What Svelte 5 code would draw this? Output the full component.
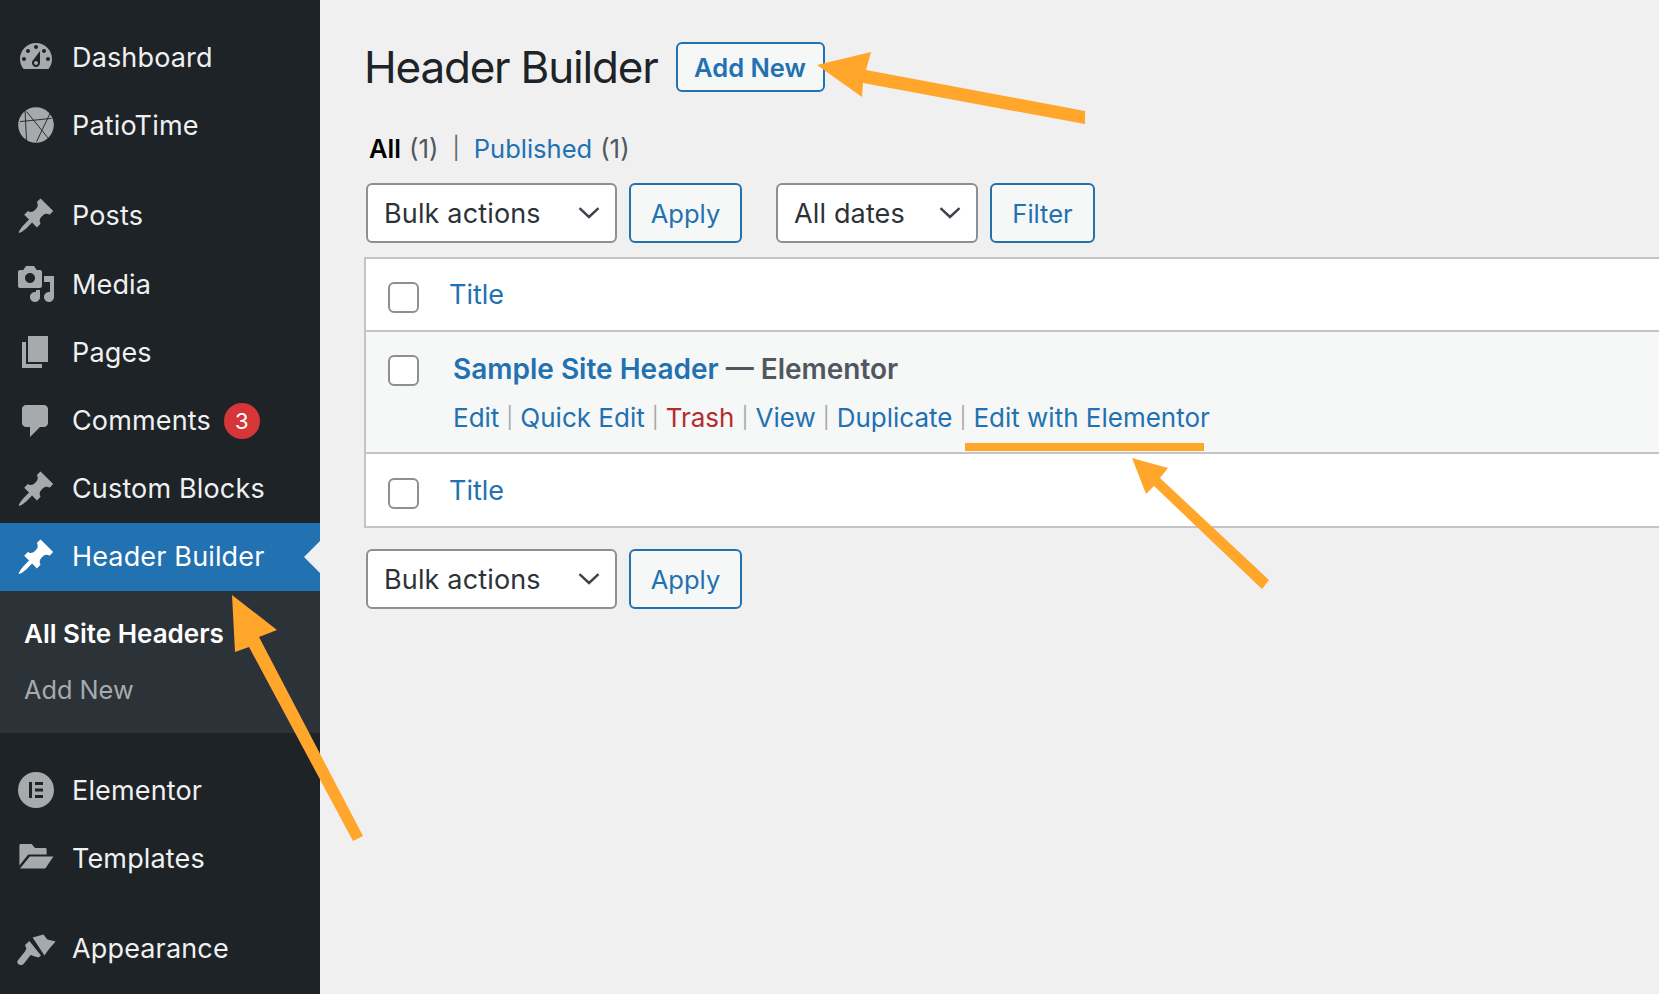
<script>
	const pin = 'M10.44 3.02l1.82-1.82 6.36 6.35-1.83 1.82c-1.05-.68-2.48-.57-3.41.36l-.75.75c-.92.93-1.04 2.35-.35 3.41l-1.83 1.82-2.41-2.41-2.8 2.79c-.42.42-3.38 2.71-3.8 2.29s1.86-3.39 2.28-3.81l2.79-2.79L4.1 9.36l1.83-1.82c1.05.69 2.48.57 3.4-.36l.75-.75c.93-.92 1.05-2.35.36-3.41z';
	const icons = {
		dashboard: 'M3.76 16h12.48c1.1-1.37 1.76-3.11 1.76-5 0-4.42-3.58-8-8-8s-8 3.58-8 8c0 1.89.66 3.63 1.76 5zM10 4c.55 0 1 .45 1 1s-.45 1-1 1-1-.45-1-1 .45-1 1-1zM6 6c.55 0 1 .45 1 1s-.45 1-1 1-1-.45-1-1 .45-1 1-1zm8 0c.55 0 1 .45 1 1s-.45 1-1 1-1-.45-1-1 .45-1 1-1zm-5.37 5.55L12 7v6c0 1.1-.9 2-2 2s-2-.9-2-2c0-.57.24-1.08.63-1.45zM4 10c.55 0 1 .45 1 1s-.45 1-1 1-1-.45-1-1 .45-1 1-1zm12 0c.55 0 1 .45 1 1s-.45 1-1 1-1-.45-1-1 .45-1 1-1zm-5 3c0-.55-.45-1-1-1s-1 .45-1 1 .45 1 1 1 1-.45 1-1z',
		pin,
		media: 'M13 11V4c0-.55-.45-1-1-1h-1.67L9 1H5L3.67 3H2c-.55 0-1 .45-1 1v7c0 .55.45 1 1 1h10c.55 0 1-.45 1-1zM7 4.5c1.38 0 2.5 1.12 2.5 2.5S8.38 9.5 7 9.5 4.5 8.38 4.5 7 5.62 4.5 7 4.5zM14 6h5v10.5c0 1.38-1.12 2.5-2.5 2.5S14 17.88 14 16.5s1.12-2.5 2.5-2.5c.17 0 .34.02.5.05V9h-3V6zm-4 8.05V13h2v3.5c0 1.38-1.12 2.5-2.5 2.5S7 17.88 7 16.5 8.12 14 9.5 14c.17 0 .34.02.5.05z',
		pages: 'M6 15V2h10v13H6zm-1 1h8v2H3V5h2v11z',
		comments: 'M5 2h9c1.1 0 2 .9 2 2v7c0 1.1-.9 2-2 2h-2l-5 5v-5H5c-1.1 0-2-.9-2-2V4c0-1.1.9-2 2-2z',
		folder: 'M1.700 13.800V3.700c0-.4.3-.7.7-.7h5.400l1.700 2h5.100c.4 0 .7.3.7.7v2.600H6.700c-.5 0-.8.2-1.100.6zM6.900 9.300h11.800l-3.700 5.500c-.2.3-.4.4-.7.4H2z',
		brush: 'M8.300 4.300 13.700 2.700 15.700 5.300 19.800 6.300 16.700 9.700 14.200 13.300zM6.700 6 12.500 13.300 11.200 14.300 9.400 13.800 7.300 13 3.900 17.400c-.6.700-1.600.8-2.500.3-.8-.6-1-1.300-.5-2L4.500 11.300 5.200 9.800 4.500 8z'
	};

	const menu = [
		{ label: 'Dashboard', icon: 'dashboard' },
		{ label: 'PatioTime', icon: 'patio', gapAfter: true },
		{ label: 'Posts', icon: 'pin' },
		{ label: 'Media', icon: 'media' },
		{ label: 'Pages', icon: 'pages' },
		{ label: 'Comments', icon: 'comments', badge: 3 },
		{ label: 'Custom Blocks', icon: 'pin' },
		{ label: 'Header Builder', icon: 'pin', current: true },
		{ label: 'Elementor', icon: 'elementor' },
		{ label: 'Templates', icon: 'folder', gapAfter: true },
		{ label: 'Appearance', icon: 'brush' }
	];

	const rowActions = [
		{ label: 'Edit' },
		{ label: 'Quick Edit' },
		{ label: 'Trash', danger: true },
		{ label: 'View' },
		{ label: 'Duplicate' },
		{ label: 'Edit with Elementor' }
	];
</script>

{#snippet chevron()}
	<svg class="chev" viewBox="0 0 22 12" width="22" height="12" aria-hidden="true">
		<path d="M1.500 1.200 11 10l9.500-8.800" fill="none" stroke="#3c434a" stroke-width="2.400" />
	</svg>
{/snippet}

{#snippet titleRow(last)}
	<div class="row" class:last>
		<input type="checkbox" class="check" />
		<a class="col-title" href="#top">Title</a>
	</div>
{/snippet}

<div class="layout">
	<aside class="sidebar">
		{#each menu as item}
			<a class="item" class:current={item.current} class:gap-after={item.gapAfter} href="#top">
				<svg class="icon" viewBox="0 0 20 20" width="40" height="40" aria-hidden="true">
					{#if item.icon === 'patio'}
						<circle cx="10" cy="10" r="8.900" fill="currentColor" />
						<path d="M4.500 2.500 5.300 18.300M2 8.300 17.800 6.700M5.300 3.300 16.200 16.700M17 4.200 10.300 18.300" fill="none" stroke="#1d2327" stroke-width=".45" />
					{:else if item.icon === 'elementor'}
						<circle cx="10" cy="10" r="9" fill="currentColor" />
						<path d="M6.500 6h1.500v8H6.500zM9.500 6h4v1.500h-4zM9.500 9.200h4v1.500h-4zM9.500 12.500h4V14h-4z" fill="#1d2327" />
					{:else}
						<path d={icons[item.icon]} fill="currentColor" />
					{/if}
				</svg>
				<span>{item.label}</span>
				{#if item.badge}<b class="badge">{item.badge}</b>{/if}
			</a>
			{#if item.current}
				<div class="submenu">
					<a class="sub active" href="#top">All Site Headers</a>
					<a class="sub" href="#top">Add New</a>
				</div>
			{/if}
		{/each}
	</aside>

	<main class="content">
		<div class="title-bar">
			<h1>Header Builder</h1>
			<a class="btn add-new" href="#top">Add New</a>
		</div>

		<p class="views">
			<strong>All</strong> <span class="count">(1)</span>
			<span class="sep">|</span>
			<a href="#top">Published</a> <span class="count">(1)</span>
		</p>

		<div class="actions">
			<div class="select bulk">Bulk actions {@render chevron()}</div>
			<button class="btn apply">Apply</button>
			<div class="select dates">All dates {@render chevron()}</div>
			<button class="btn filter">Filter</button>
		</div>

		<div class="table">
			{@render titleRow(false)}
			<div class="row post">
				<input type="checkbox" class="check" />
				<div class="post-body">
					<div class="post-title"><a href="#top">Sample Site Header</a> — Elementor</div>
					<div class="row-actions">
						{#each rowActions as action, i}
							{#if i > 0}<span class="sep">|</span>{/if}
							<a href="#top" class:danger={action.danger}>{action.label}</a>
						{/each}
					</div>
				</div>
			</div>
			{@render titleRow(true)}
		</div>

		<div class="actions bottom">
			<div class="select bulk">Bulk actions {@render chevron()}</div>
			<button class="btn apply">Apply</button>
		</div>
	</main>

	<svg class="marks" viewBox="0 0 1659 994" width="1659" height="994" aria-hidden="true">
		<path d="M817 65 871 52 866 70 1085 111V124L863 83 862 97z" />
		<path d="M965 443H1204V451H965z" />
		<path d="M1132 458 1168 468 1160 478 1269 580 1262 589 1154 486 1146 494z" />
		<path d="M232 595 277 630 259 637 363 836 353 841 249 647 235 652z" />
	</svg>
</div>

<style>
	:global(body) {
		margin: 0;
		background: #f0f0f1;
		overflow: hidden;
	}
	.layout {
		position: relative;
		display: flex;
		height: 994px;
		overflow: hidden;
		font-family: Inter, 'Liberation Sans', sans-serif;
		font-size: 26px;
		color: #3c434a;
	}
	a { text-decoration: none; color: #2271b1; }

	.sidebar {
		flex: 0 0 320px;
		box-sizing: border-box;
		padding-top: 23px;
		background: #1d2327;
	}
	.item {
		display: flex;
		align-items: center;
		gap: 16px;
		height: 68.200px;
		padding-left: 16px;
		color: #f0f0f1;
		font-size: 27px;
		letter-spacing: 0.15px;
	}
	.item .icon { flex: none; color: #a7aaad; }
	.item.gap-after { margin-bottom: 22.500px; }
	.item.current {
		position: relative;
		background: #2271b1;
		color: #fff;
	}
	.item.current .icon { color: #fff; }
	.item.current::after {
		content: '';
		position: absolute;
		right: 0;
		top: 50%;
		margin-top: -16px;
		border: 16px solid transparent;
		border-left-width: 0;
		border-right-color: #f0f0f1;
	}
	.badge {
		display: flex;
		align-items: center;
		justify-content: center;
		width: 36px;
		height: 36px;
		margin-left: -3px;
		border-radius: 50%;
		background: #d63638;
		color: #fff;
		font-size: 22px;
		font-weight: 400;
	}
	.submenu {
		display: flex;
		flex-direction: column;
		height: 142px;
		margin-bottom: 23px;
		padding-top: 14px;
		box-sizing: border-box;
		background: #2c3338;
	}
	.sub {
		display: flex;
		align-items: center;
		height: 56px;
		padding-left: 24px;
		font-size: 25.300px;
		color: #a7aaad;
	}
	.sub.active { color: #fff; font-weight: 600; font-size: 26px; }

	.content {
		flex: 1;
		min-width: 0;
		padding: 42px 0 0 44px;
	}
	.title-bar {
		display: flex;
		align-items: center;
		gap: 18px;
		height: 50px;
	}
	h1 {
		margin: 0;
		font-size: 44px;
		font-weight: 400;
		letter-spacing: -1.200px;
		color: #1d2327;
		line-height: 50px;
	}
	.btn {
		display: inline-flex;
		align-items: center;
		justify-content: center;
		box-sizing: border-box;
		border: 2px solid #2271b1;
		border-radius: 6px;
		background: #f6f7f7;
		color: #2271b1;
		font: inherit;
		font-size: 25.500px;
		padding: 0;
	}
	.add-new {
		width: 149px;
		height: 50px;
		font-weight: 600;
	}
	.views {
		display: flex;
		align-items: center;
		gap: 8px;
		height: 36px;
		margin: 38px 0 0;
		padding-left: 5px;
		font-size: 25.500px;
	}
	.views strong { font-weight: 600; color: #000; }
	.count { color: #50575e; font-size: 26px; }
	.views .sep { margin: 0 6px; color: #646970; font-size: 22px; }
	.actions {
		display: flex;
		gap: 12px;
		height: 60px;
		margin: 17px 0 0 2px;
	}
	.select {
		position: relative;
		display: flex;
		align-items: center;
		box-sizing: border-box;
		padding-left: 16px;
		border: 2px solid #8c8f94;
		border-radius: 6px;
		background: #fff;
		color: #2c3338;
		font-size: 27px;
		letter-spacing: 0.15px;
	}
	.chev { position: absolute; right: 15px; top: 22px; }
	.bulk { width: 251px; }
	.apply { width: 113px; }
	.dates { width: 202px; margin-left: 22px; }
	.filter { width: 105px; }

	.table {
		box-sizing: border-box;
		margin-top: 14px;
		background: #fff;
		border: 2px solid #c3c4c7;
		border-right: 0;
	}
	.row {
		display: flex;
		align-items: flex-start;
		gap: 31px;
		height: 71px;
		padding: 23px 0 0 22px;
		box-sizing: border-box;
	}
	.row.last { height: 72px; padding-top: 24px; }
	.col-title { line-height: 26px; font-size: 27px; margin-left: -1px; }
	.check {
		appearance: none;
		flex: none;
		width: 31px;
		height: 31px;
		margin: 0;
		border: 2px solid #8c8f94;
		border-radius: 6px;
		background: #fff;
	}
	.post {
		height: 124px;
		background: #f6f7f7;
		border-top: 2px solid #c3c4c7;
		border-bottom: 2px solid #c3c4c7;
	}
	.post-body { margin: -4px 0 0 3px; }
	.post-title {
		font-size: 28px;
		font-weight: 600;
		line-height: 36px;
		color: #50575e;
	}
	.row-actions {
		display: flex;
		align-items: center;
		gap: 7px;
		height: 34px;
		margin-top: 13px;
		font-size: 26px;
	}
	.row-actions .sep { color: #a7aaad; font-size: 21px; }
	.danger { color: #b32d2e; }
	.bottom { margin-top: 21px; }

	.marks {
		position: absolute;
		top: 0;
		left: 0;
		pointer-events: none;
		fill: #ffa62b;
	}
</style>
